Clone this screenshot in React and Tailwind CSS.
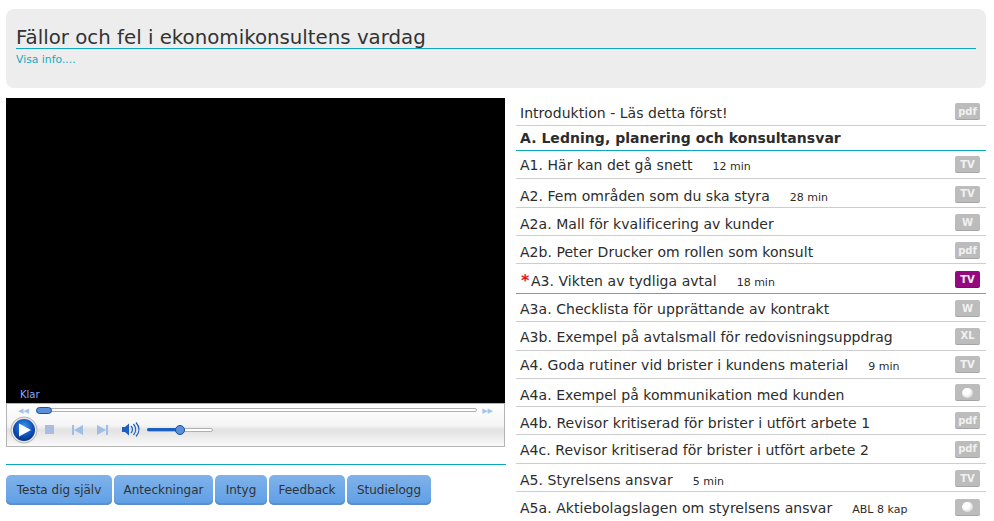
import React from "react";

const font = "font-['DejaVu_Sans',Verdana,sans-serif]";

const rows = [
  { text: "Introduktion - Läs detta först!", tag: "pdf", h: "h-[28px]", t: "pt-[4px]" },
  { text: "A. Ledning, planering och konsultansvar", bold: true, line: "border-[#0fa7bf]", h: "h-[25px]" },
  { text: "A1. Här kan det gå snett", min: "12 min", tag: "TV", h: "h-[28px]", t: "pt-[2px]" },
  { text: "A2. Fem områden som du ska styra", min: "28 min", tag: "TV", h: "h-[29px]", t: "pt-[4px]", p: "pt-[2px]" },
  { text: "A2a. Mall för kvalificering av kunder", tag: "W", h: "h-[28px]", t: "pt-[4px]", p: "pt-[2px]" },
  { text: "A2b. Peter Drucker om rollen som konsult", tag: "pdf", h: "h-[28px]", t: "pt-[4px]", p: "pt-[2px]" },
  { text: "A3. Vikten av tydliga avtal", min: "18 min", tag: "TV", star: true, active: true, line: "border-[#ee7d22]", h: "h-[30px]", t: "pt-[4px]", p: "pt-[2px]" },
  { text: "A3a. Checklista för upprättande av kontrakt", tag: "W", h: "h-[28px]", t: "pt-[2px]", p: "pt-[2px]" },
  { text: "A3b. Exempel på avtalsmall för redovisningsuppdrag", tag: "XL", h: "h-[29px]", t: "pt-[2px]" },
  { text: "A4. Goda rutiner vid brister i kundens material", min: "9 min", tag: "TV", h: "h-[28px]", t: "pt-[2px]" },
  { text: "A4a. Exempel på kommunikation med kunden", tag: "o", h: "h-[28px]", t: "pt-[5px]" },
  { text: "A4b. Revisor kritiserad för brister i utfört arbete 1", tag: "pdf", h: "h-[28px]", t: "pt-[5px]" },
  { text: "A4c. Revisor kritiserad för brister i utfört arbete 2", tag: "pdf", h: "h-[29px]", t: "pt-[3px]" },
  { text: "A5. Styrelsens ansvar", min: "5 min", tag: "TV", h: "h-[28px]", t: "pt-[3px]", p: "pt-[2px]" },
  { text: "A5a. Aktiebolagslagen om styrelsens ansvar", min: "ABL 8 kap", tag: "o", h: "h-[28px]", t: "pt-[3px]", p: "pt-[2px]", last: true },
];

function Tag({ tag, active }) {
  return (
    <span
      className={`flex h-[17px] w-[25px] items-center justify-center rounded-[2px] text-[10px] font-bold leading-none text-[#f1f1f1] shadow-[inset_0_-1px_0_rgba(0,0,0,0.12)] ${
        active ? "bg-[#95087f]" : "bg-[#bcbcbc]"
      }`}
    >
      {tag === "o" ? (
        <span className="h-[10px] w-[11px] rounded-full bg-[radial-gradient(circle_at_40%_35%,#ffffff_35%,#bdbdbd_100%)]" />
      ) : (
        tag
      )}
    </span>
  );
}

function Row({ row }) {
  return (
    <div
      className={`flex ${row.h} ${row.p || ""} shrink-0 items-center justify-between pl-[4px] pr-[6px] ${
        row.last ? "" : `border-b ${row.line || "border-[#cdcdcd]"}`
      }`}
    >
      <div className={`flex items-baseline text-[14px] tracking-[0.04px] text-[#2c2c2c] ${row.t || ""}`}>
        {row.star && <span className="w-[11px] pl-[1px] text-[16px] font-bold leading-none text-[#e8101c]">*</span>}
        <span className={row.bold ? "font-bold" : ""}>{row.text}</span>
        {row.min && <span className="ml-[20px] text-[11px] tracking-normal">{row.min}</span>}
      </div>
      {row.tag && <Tag tag={row.tag} active={row.active} />}
    </div>
  );
}

function Controls() {
  return (
    <svg width="210" height="30" viewBox="0 0 210 30" className="absolute left-[2px] top-[10px]">
      <defs>
        <radialGradient id="orb" cx="50%" cy="35%" r="70%">
          <stop offset="0" stopColor="#3f9bf0" />
          <stop offset="0.6" stopColor="#0d4fb8" />
          <stop offset="1" stopColor="#062a78" />
        </radialGradient>
      </defs>
      <circle cx="15" cy="16" r="13" fill="#e8e8e8" stroke="#b5b5b5" />
      <circle cx="15" cy="16" r="11" fill="url(#orb)" />
      <path d="M10 9.500 L22 16 L10 22.500 Z" fill="#ffffff" />
      <rect x="36" y="11" width="9" height="9" fill="#a9bde0" />
      <path d="M63 11h2v10h-2zM74 11v10l-9-5z" fill="#a0bde6" />
      <path d="M88 11v10l9-5zM97 11h2v10h-2z" fill="#a0bde6" />
      <path d="M113 13h3l4-3.500v12l-4-3.500h-3z" fill="#1b5fc0" />
      <path d="M122 12q3 3.500 0 7M124.500 10q4.500 5.500 0 11M127 8.500q6 7 0 14" fill="none" stroke="#1b5fc0" strokeWidth="1.200" />
    </svg>
  );
}

function Player() {
  return (
    <div className="relative h-[44px] border border-[#b4b4b4] bg-[linear-gradient(#ffffff_0%,#f5f5f5_50%,#e2e2e2_62%,#fafafa_100%)]">
      <div className="absolute left-[11px] top-[2px] text-[7px] leading-[10px] text-[#a4c4ee]">◀◀</div>
      <div className="absolute left-[30px] right-[27px] top-[4px] h-[4px] rounded-full border border-[#b0b0b0] bg-white" />
      <div className="absolute left-[29px] top-[3px] h-[7px] w-[16px] rounded-full border border-[#1b4f9c] bg-[#5c8fd8]" />
      <div className="absolute right-[11px] top-[2px] text-[7px] leading-[10px] text-[#a4c4ee]">▶▶</div>
      <Controls />
      <div className="absolute left-[140px] top-[24px] h-[4px] w-[66px] rounded-full border border-[#b0b0b0] bg-white" />
      <div className="absolute left-[140px] top-[24px] h-[3px] w-[33px] rounded-full bg-[#1b5fc0]" />
      <div className="absolute left-[168px] top-[21px] h-[10px] w-[10px] rounded-full border border-[#1b4f9c] bg-[#5c8fd8]" />
    </div>
  );
}

const buttons = [
  { label: "Testa dig själv", w: "w-[106px]" },
  { label: "Anteckningar", w: "w-[99px]" },
  { label: "Intyg", w: "w-[52px]" },
  { label: "Feedback", w: "w-[76px]" },
  { label: "Studielogg", w: "w-[84px]" },
];

export default function App() {
  return (
    <div className={`${font} h-[521px] w-[994px] overflow-hidden bg-white`}>
      <div className="ml-[6px] mr-[8px] pt-[9px]">
        <header className="h-[79px] rounded-[8px] bg-[#ededed] px-[10px] pt-[15px]">
          <h1 className="h-[25px] border-b border-[#0fa7bf] text-[19.8px] leading-[27px] text-[#333]">
            Fällor och fel i ekonomikonsultens vardag
          </h1>
          <a className="mt-[3px] block text-[10.8px] leading-[15px] text-[#18a9c0]">Visa info....</a>
        </header>
        <div className="mt-[10px] flex">
          <section className="w-[500px] shrink-0">
            <div className="mr-[1px]">
              <div className="relative h-[305px] bg-black">
                <span className="absolute bottom-[1px] left-[14px] text-[10px] leading-[14px] text-[#8ca6ff]">Klar</span>
              </div>
              <Player />
            </div>
            <div className="mt-[17px] border-t border-[#0fa7bf]" />
            <nav className="mt-[10px] flex gap-[2px]">
              {buttons.map((b) => (
                <button
                  key={b.label}
                  className={`${b.w} h-[30px] rounded-[5px] bg-[linear-gradient(#7fb2ea,#5f9fe6)] text-[12px] text-[#333] shadow-[inset_0_-2px_0_#5a8fc9]`}
                >
                  {b.label}
                </button>
              ))}
            </nav>
          </section>
          <section className="ml-[10px] flex flex-1 flex-col">
            {rows.map((r) => (
              <Row key={r.text} row={r} />
            ))}
          </section>
        </div>
      </div>
    </div>
  );
}
